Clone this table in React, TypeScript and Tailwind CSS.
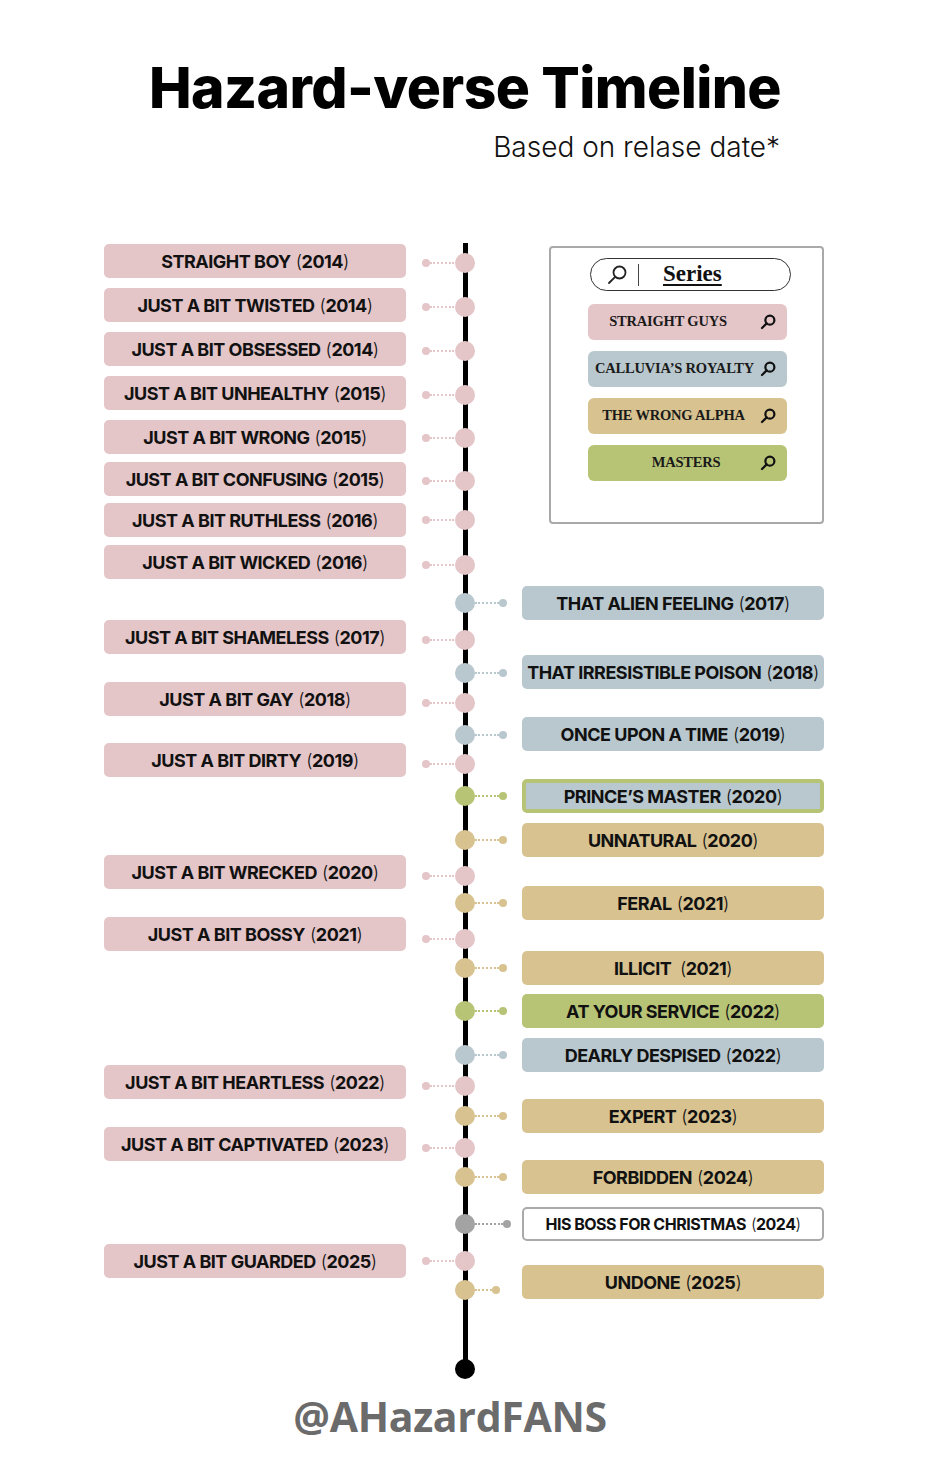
import React from 'react';

type Tone = 'pink' | 'blue' | 'tan' | 'green' | 'gray';
type Variant = 'fill' | 'framed' | 'outline';
type Reach = 'short' | 'normal' | 'long';

interface Entry {
  title: string;
  year: string;
  top: number; // box top, relative to the timeline section
  cy: number; // node centre, relative to the timeline section
  tone: Tone;
  variant?: Variant;
  reach?: Reach;
}

const tones: Record<Tone, { bg: string; line: string }> = {
  pink: { bg: 'bg-[#e4c5c8]', line: 'border-[#e4c5c8]' },
  blue: { bg: 'bg-[#b9c8ce]', line: 'border-[#b9c8ce]' },
  tan: { bg: 'bg-[#d7c290]', line: 'border-[#d7c290]' },
  green: { bg: 'bg-[#b8c475]', line: 'border-[#b8c475]' },
  gray: { bg: 'bg-[#a3a3a3]', line: 'border-[#a3a3a3]' },
};

// width of the dotted run, and the gap left before the box (right side)
const reaches: Record<Reach, { run: string; gap: string }> = {
  short: { run: 'w-[17px]', gap: 'ml-[22px]' },
  normal: { run: 'w-[24px]', gap: 'ml-[15px]' },
  long: { run: 'w-[28px]', gap: 'ml-[11px]' },
};

const leftEntries: Entry[] = [
  { title: 'STRAIGHT BOY', year: '2014', top: 4, cy: 23, tone: 'pink' },
  { title: 'JUST A BIT TWISTED', year: '2014', top: 48, cy: 67, tone: 'pink' },
  { title: 'JUST A BIT OBSESSED', year: '2014', top: 92, cy: 111, tone: 'pink' },
  { title: 'JUST A BIT UNHEALTHY', year: '2015', top: 136, cy: 155, tone: 'pink' },
  { title: 'JUST A BIT WRONG', year: '2015', top: 180, cy: 198, tone: 'pink' },
  { title: 'JUST A BIT CONFUSING', year: '2015', top: 222, cy: 241, tone: 'pink' },
  { title: 'JUST A BIT RUTHLESS', year: '2016', top: 263, cy: 280, tone: 'pink' },
  { title: 'JUST A BIT WICKED', year: '2016', top: 305, cy: 325, tone: 'pink' },
  { title: 'JUST A BIT SHAMELESS', year: '2017', top: 380, cy: 400, tone: 'pink' },
  { title: 'JUST A BIT GAY', year: '2018', top: 442, cy: 463, tone: 'pink' },
  { title: 'JUST A BIT DIRTY', year: '2019', top: 503, cy: 524, tone: 'pink' },
  { title: 'JUST A BIT WRECKED', year: '2020', top: 615, cy: 636, tone: 'pink' },
  { title: 'JUST A BIT BOSSY', year: '2021', top: 677, cy: 699, tone: 'pink' },
  { title: 'JUST A BIT HEARTLESS', year: '2022', top: 825, cy: 846, tone: 'pink' },
  { title: 'JUST A BIT CAPTIVATED', year: '2023', top: 887, cy: 908, tone: 'pink' },
  { title: 'JUST A BIT GUARDED', year: '2025', top: 1004, cy: 1021, tone: 'pink' },
];

const rightEntries: Entry[] = [
  { title: 'THAT ALIEN FEELING', year: '2017', top: 346, cy: 363, tone: 'blue' },
  { title: 'THAT IRRESISTIBLE POISON', year: '2018', top: 415, cy: 433, tone: 'blue' },
  { title: 'ONCE UPON A TIME', year: '2019', top: 477, cy: 495, tone: 'blue' },
  { title: 'PRINCE’S MASTER', year: '2020', top: 539, cy: 556, tone: 'green', variant: 'framed' },
  { title: 'UNNATURAL', year: '2020', top: 583, cy: 600, tone: 'tan' },
  { title: 'FERAL', year: '2021', top: 646, cy: 663, tone: 'tan' },
  { title: 'ILLICIT\u00a0', year: '2021', top: 711, cy: 728, tone: 'tan' },
  { title: 'AT YOUR SERVICE', year: '2022', top: 754, cy: 771, tone: 'green' },
  { title: 'DEARLY DESPISED', year: '2022', top: 798, cy: 815, tone: 'blue' },
  { title: 'EXPERT', year: '2023', top: 859, cy: 876, tone: 'tan' },
  { title: 'FORBIDDEN', year: '2024', top: 920, cy: 937, tone: 'tan' },
  { title: 'HIS BOSS FOR CHRISTMAS', year: '2024', top: 967, cy: 984, tone: 'gray', variant: 'outline', reach: 'long' },
  { title: 'UNDONE', year: '2025', top: 1025, cy: 1050, tone: 'tan', reach: 'short' },
];

const series = [
  { name: 'STRAIGHT GUYS', bg: 'bg-[#e4c5c8]', pad: 'pr-[11px]' },
  { name: 'CALLUVIA’S ROYALTY', bg: 'bg-[#b9c8ce]', pad: 'pl-[2px]' },
  { name: 'THE WRONG ALPHA', bg: 'bg-[#d7c290]', pad: 'pl-0' },
  { name: 'MASTERS', bg: 'bg-[#b8c475]', pad: 'pl-[25px]' },
];

const BOX_H = 34;
const END_CY = 1129;

const Search = ({ className, stroke = 2.4 }: { className?: string; stroke?: number }) => (
  <svg viewBox="0 0 24 24" fill="none" stroke="currentColor" strokeWidth={stroke} strokeLinecap="round" className={className}>
    <circle cx="14.5" cy="9.5" r="6" />
    <path d="M10.2 13.8 4 20" />
  </svg>
);

const Label = ({ e }: { e: Entry }) => (
  <>
    {e.title}
    <span className="ml-[5px] font-light">(</span>
    {e.year}
    <span className="font-light">)</span>
  </>
);

const Box = ({ e }: { e: Entry }) => {
  const label = 'text-[18px] font-bold tracking-[-0.5px] text-[#111] whitespace-nowrap';
  if (e.variant === 'framed') {
    return (
      <div className={`h-[34px] w-[302px] shrink-0 rounded-[5px] p-[4px] ${tones.green.bg}`}>
        <div className={`flex h-full items-center justify-center ${tones.blue.bg} ${label}`}>
          <Label e={e} />
        </div>
      </div>
    );
  }
  if (e.variant === 'outline') {
    return (
      <div className="flex h-[34px] w-[302px] shrink-0 items-center justify-center rounded-[5px] border-2 border-[#a9a9a9] bg-white text-[16px] font-bold tracking-[-0.5px] text-[#111] whitespace-nowrap">
        <Label e={e} />
      </div>
    );
  }
  return (
    <div className={`flex h-[34px] w-[302px] shrink-0 items-center justify-center rounded-[5px] ${tones[e.tone].bg} ${label}`}>
      <Label e={e} />
    </div>
  );
};

const Connector = ({ e, side }: { e: Entry; side: 'left' | 'right' }) => {
  const t = tones[e.tone];
  const r = reaches[e.reach ?? 'normal'];
  const dot = <div className={`h-[8px] w-[8px] shrink-0 rounded-full ${t.bg}`} />;
  const dots = <div className={`h-0 border-t-2 border-dotted ${r.run} ${t.line}`} />;
  return (
    <div className="flex items-center" style={{ marginTop: e.cy - e.top - 4 }}>
      {side === 'left' ? (
        <>
          {dot}
          {dots}
        </>
      ) : (
        <>
          {dots}
          {dot}
        </>
      )}
    </div>
  );
};

const SeriesPanel = () => (
  <div className="ml-[74px] mt-[6px] h-[278px] w-[275px] rounded-[4px] border-2 border-[#a9a9a9] bg-white pt-[10px]">
    <div className="ml-[39px] flex h-[33px] w-[201px] items-center rounded-full border-[1.5px] border-[#333]">
      <Search className="ml-[14px] h-[24px] w-[24px] text-[#222]" stroke={1.8} />
      <div className="ml-[9px] h-[22px] w-px bg-[#444]" />
      <span className="ml-[24px] font-['Liberation_Serif',serif] text-[23px] font-bold text-[#111] underline underline-offset-[3px]">
        Series
      </span>
    </div>
    <div className="ml-[37px] mt-[13px] flex w-[199px] flex-col gap-[11px]">
      {series.map((s) => (
        <div key={s.name} className={`flex h-[36px] items-center rounded-[6px] ${s.bg}`}>
          <span className={`flex-1 text-center font-['Liberation_Serif',serif] text-[14.5px] font-semibold tracking-[-0.2px] text-[#1a1a1a] whitespace-nowrap ${s.pad}`}>
            {s.name}
          </span>
          <Search className="mr-[10px] h-[18px] w-[18px] shrink-0 text-[#111]" stroke={3} />
        </div>
      ))}
    </div>
  </div>
);

export default function App() {
  const nodes = [...leftEntries, ...rightEntries].sort((a, b) => a.cy - b.cy);

  let leftBottom = 0;
  let rightBottom = 284;
  let nodeBottom = 0;

  return (
    <div className="min-h-[1474px] w-[930px] bg-white font-['Inter','Liberation_Sans',sans-serif]">
      {/* header */}
      <div className="h-[240px] pt-[59px]">
        <h1 className="text-center text-[57px] font-extrabold leading-none tracking-[-0.6px] text-black">
          Hazard-verse Timeline
        </h1>
        <p className="mt-[17px] pr-[150px] text-right text-[28px] font-light leading-none text-[#111]">
          Based on relase date*
        </p>
      </div>

      {/* timeline */}
      <div className="flex h-[1142px]">
        <div className="ml-[100px] flex w-[355px] flex-col">
          {leftEntries.map((e) => {
            const mt = e.top - leftBottom;
            leftBottom = e.top + BOX_H;
            return (
              <div key={e.title} className="flex items-start" style={{ marginTop: mt }}>
                <div className="ml-[4px]">
                  <Box e={e} />
                </div>
                <div className="ml-[16px]">
                  <Connector e={e} side="left" />
                </div>
              </div>
            );
          })}
        </div>

        <div className="relative flex w-[20px] flex-col">
          <div className="absolute left-[8px] top-[3px] w-[4.5px] bg-black" style={{ height: END_CY - 3 }} />
          {nodes.map((n) => {
            const mt = n.cy - 10 - nodeBottom;
            nodeBottom = n.cy + 10;
            return (
              <div
                key={n.title}
                className={`relative h-[20px] w-[20px] rounded-full ${tones[n.tone].bg}`}
                style={{ marginTop: mt }}
              />
            );
          })}
          <div className="relative h-[20px] w-[20px] rounded-full bg-black" style={{ marginTop: END_CY - 10 - nodeBottom }} />
        </div>

        <div className="flex flex-1 flex-col">
          <SeriesPanel />
          {rightEntries.map((e) => {
            const mt = e.top - rightBottom;
            rightBottom = e.top + BOX_H;
            return (
              <div key={e.title} className="flex items-start" style={{ marginTop: mt }}>
                <Connector e={e} side="right" />
                <div className={reaches[e.reach ?? 'normal'].gap}>
                  <Box e={e} />
                </div>
              </div>
            );
          })}
        </div>
      </div>

      {/* footer handle */}
      <div className="flex justify-center pr-[30px] pt-[14px]">
        <span className="font-['Open_Sans',sans-serif] text-[41px] font-bold leading-none tracking-[-0.3px] text-[#6b6b6b]">
          @AHazardFANS
        </span>
      </div>
    </div>
  );
}
